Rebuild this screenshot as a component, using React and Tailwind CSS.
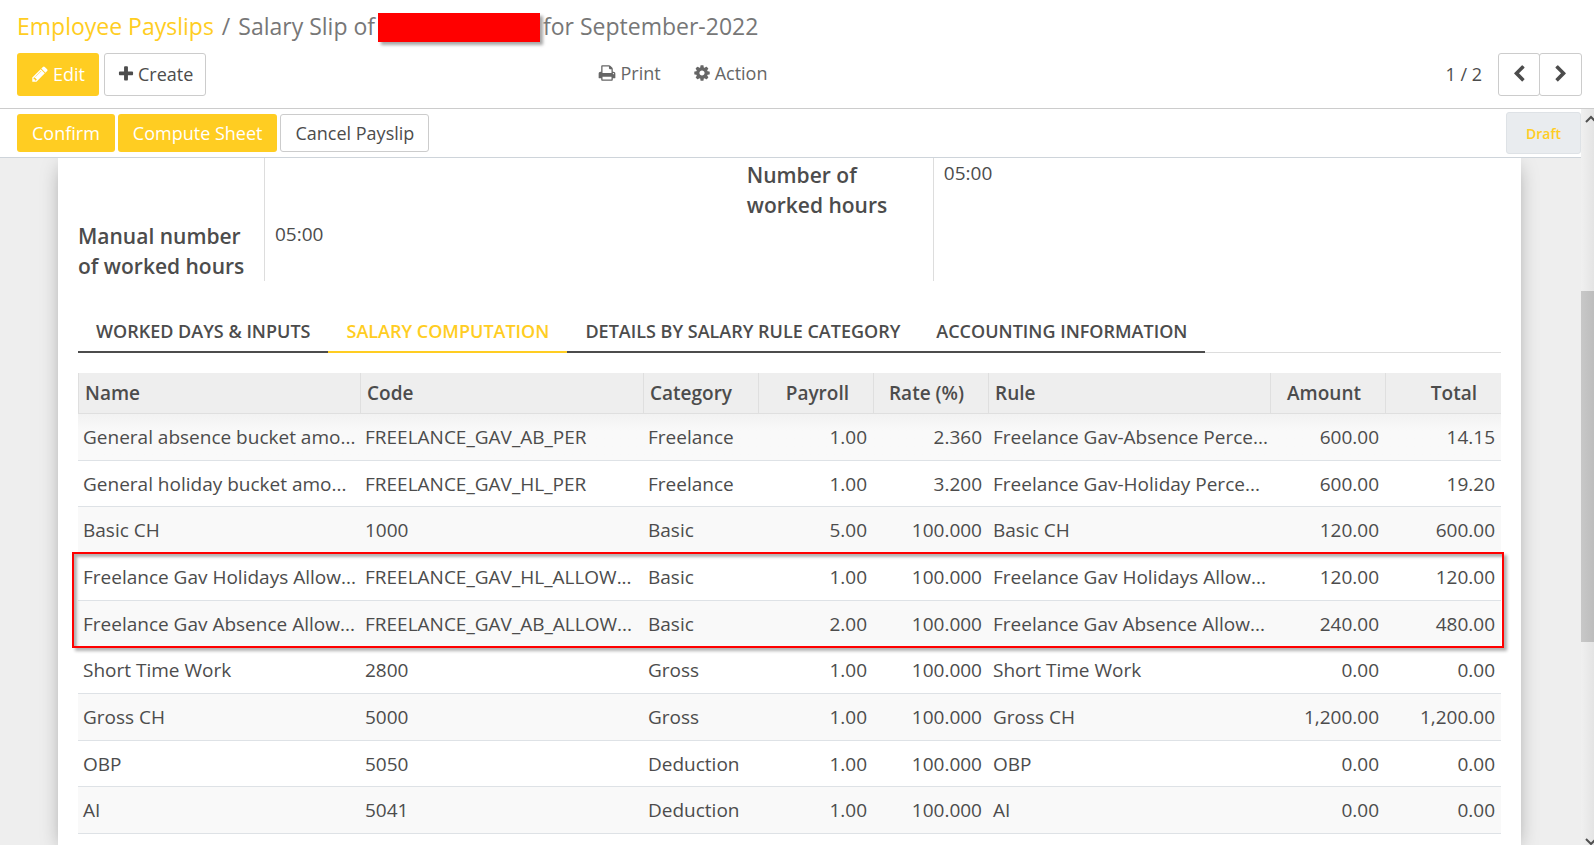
import React, { useState } from "react";

const icons = {
  pencil:
    "M491 1536l91-91-235-235-91 91v107h128v128h107zm523-928q0-22-22-22-10 0-17 7l-542 542q-7 7-7 17 0 22 22 22 10 0 17-7l542-542q7-7 7-17zm-54-192l416 416-832 832h-416v-416zm683 96q0 53-37 90l-166 166-416-416 166-165q36-38 90-38 53 0 91 38l235 234q37 39 37 91z",
  plus:
    "M1600 736v192q0 40-28 68t-68 28h-416v416q0 40-28 68t-68 28h-192q-40 0-68-28t-28-68v-416h-416q-40 0-68-28t-28-68v-192q0-40 28-68t68-28h416v-416q0-40 28-68t68-28h192q40 0 68 28t28 68v416h416q40 0 68 28t28 68z",
  print:
    "M448 1536h896v-256h-896v256zm0-640h896v-384h-160q-40 0-68-28t-28-68v-160h-640v640zm1152 64q0-26-19-45t-45-19-45 19-19 45 19 45 45 19 45-19 19-45zm128 0v416q0 13-9.5 22.5t-22.5 9.5h-224v160q0 40-28 68t-68 28h-960q-40 0-68-28t-28-68v-160h-224q-13 0-22.5-9.5t-9.5-22.5v-416q0-79 56.5-135.5t135.5-56.5h64v-544q0-40 28-68t68-28h672q40 0 88 20t76 48l152 152q28 28 48 76t20 88v256h64q79 0 135.5 56.5t56.5 135.5z",
  cog:
    "M1152 896q0-106-75-181t-181-75-181 75-75 181 75 181 181 75 181-75 75-181zm512-109v222q0 12-8 23t-20 13l-185 28q-19 54-39 91 35 50 107 138 10 12 10 25t-9 23q-27 37-99 108t-94 71q-12 0-26-9l-138-108q-44 23-91 38-16 136-29 186-7 28-36 28h-222q-14 0-24.5-8.5t-11.5-21.5l-28-184q-49-16-90-37l-141 107q-10 9-25 9-14 0-25-11-126-114-165-168-7-10-7-23 0-12 8-23 15-21 51-66.5t54-70.5q-27-50-41-99l-183-27q-13-2-21-12.5t-8-23.5v-222q0-12 8-23t19-13l186-28q14-46 39-92-40-57-107-138-10-12-10-24 0-10 9-23 26-36 98.5-107.5t94.5-71.5q13 0 26 10l138 107q44-23 91-38 16-136 29-186 7-28 36-28h222q14 0 24.5 8.5t11.5 21.5l28 184q49 16 90 37l142-107q9-9 24-9 13 0 25 10 129 119 165 170 7 8 7 22 0 12-8 23-15 21-51 66.5t-54 70.5q26 50 41 98l183 28q13 2 21 12.5t8 23.5z",
  left:
    "M1427 301l-531 531 531 531q19 19 19 45t-19 45l-166 166q-19 19-45 19t-45-19l-742-742q-19-19-19-45t19-45l742-742q19-19 45-19t45 19l166 166q19 19 19 45t-19 45z",
  right:
    "M1363 877l-742 742q-19 19-45 19t-45-19l-166-166q-19-19-19-45t19-45l531-531-531-531q-19-19-19-45t19-45l166-166q19-19 45-19t45 19l742 742q19 19 19 45t-19 45z",
};

const Icon = ({ name }) => (
  <svg viewBox="0 0 1792 1792" className="w-[18px] h-[18px] shrink-0" fill="currentColor" aria-hidden="true">
    <path d={icons[name]} />
  </svg>
);

const tabs = [
  "Worked Days & Inputs",
  "Salary Computation",
  "Details By Salary Rule Category",
  "Accounting Information",
];

const columns = [
  { label: "Name", width: "w-[282px]" },
  { label: "Code", width: "w-[283px]" },
  { label: "Category", width: "w-[115px]" },
  { label: "Payroll", width: "w-[115px]", number: true },
  { label: "Rate (%)", width: "w-[115px]", number: true },
  { label: "Rule", width: "w-[282px]" },
  { label: "Amount", width: "w-[115px]", number: true },
  { label: "Total", width: "w-[116px]", number: true },
];

const lines = [
  ["General absence bucket amo...", "FREELANCE_GAV_AB_PER", "Freelance", "1.00", "2.360", "Freelance Gav-Absence Perce...", "600.00", "14.15"],
  ["General holiday bucket amo...", "FREELANCE_GAV_HL_PER", "Freelance", "1.00", "3.200", "Freelance Gav-Holiday Perce...", "600.00", "19.20"],
  ["Basic CH", "1000", "Basic", "5.00", "100.000", "Basic CH", "120.00", "600.00"],
  ["Freelance Gav Holidays Allow...", "FREELANCE_GAV_HL_ALLOW...", "Basic", "1.00", "100.000", "Freelance Gav Holidays Allow...", "120.00", "120.00"],
  ["Freelance Gav Absence Allow...", "FREELANCE_GAV_AB_ALLOW...", "Basic", "2.00", "100.000", "Freelance Gav Absence Allow...", "240.00", "480.00"],
  ["Short Time Work", "2800", "Gross", "1.00", "100.000", "Short Time Work", "0.00", "0.00"],
  ["Gross CH", "5000", "Gross", "1.00", "100.000", "Gross CH", "1,200.00", "1,200.00"],
  ["OBP", "5050", "Deduction", "1.00", "100.000", "OBP", "0.00", "0.00"],
  ["AI", "5041", "Deduction", "1.00", "100.000", "AI", "0.00", "0.00"],
];

const ControlPanel = () => (
  <header className="border-b border-[#ccc] pl-[17px] pr-3 pt-[9px] pb-3 text-lg">
    <nav className="flex items-center h-9 text-[23px] text-[#777]">
      <a href="#payslips" className="text-[#ffcd22]">Employee Payslips</a>
      <span className="px-2">/</span>
      <span>Salary Slip of</span>
      <span className="w-[162px] h-[29px] ml-[3px] mr-[3px] bg-[#f00] shadow-[3px_3px_3px_rgba(0,0,0,0.35)]"></span>
      <span>for September-2022</span>
    </nav>
    <div className="flex justify-between mt-2">
      <div className="w-1/2 flex items-center justify-between">
        <div className="flex gap-[5px]">
          <button className="flex items-center gap-1 h-[43px] px-[14px] pb-[2px] rounded-[3px] bg-[#ffcd22] text-white">
            <Icon name="pencil" />
            Edit
          </button>
          <button className="flex items-center gap-[3px] h-[43px] px-3 pb-[2px] rounded-[3px] border border-[#ccc]">
            <Icon name="plus" />
            Create
          </button>
        </div>
        <div className="flex gap-8 pr-8 pb-1 text-[#666]">
          <button className="flex items-center gap-1">
            <Icon name="print" />
            Print
          </button>
          <button className="flex items-center gap-1">
            <Icon name="cog" />
            Action
          </button>
        </div>
      </div>
      <div className="flex items-center">
        <span className="mr-4 pb-[2px]">1 / 2</span>
        <button aria-label="Previous" className="flex items-center justify-center w-[42px] h-[43px] pb-[2px] rounded-[3px] border border-[#ccc]">
          <Icon name="left" />
        </button>
        <button aria-label="Next" className="flex items-center justify-center w-[43px] h-[43px] pb-[2px] -ml-px rounded-[3px] border border-[#ccc]">
          <Icon name="right" />
        </button>
      </div>
    </div>
  </header>
);

const StatusBar = () => (
  <div className="flex items-center justify-between h-[49px] pl-[17px] border-b border-[#ced4da] bg-white text-lg">
    <div className="flex gap-[3px]">
      <button className="h-[38px] px-[15px] rounded-[3px] bg-[#ffcd22] text-white">Confirm</button>
      <button className="h-[38px] px-[15px] rounded-[3px] bg-[#ffcd22] text-white">Compute Sheet</button>
      <button className="h-[38px] px-[14px] rounded-[3px] border border-[#ccc]">Cancel Payslip</button>
    </div>
    <span className="flex items-center justify-center w-[75px] h-[42px] pt-px rounded-[3px] border border-[#dee2e6] bg-[#e9ecef] text-sm font-semibold text-[#ffcd22]">
      Draft
    </span>
  </div>
);

const HoursField = ({ label, className }) => (
  <dl className="flex flex-1 h-[123px] leading-[30px]">
    <dt className="w-[187px] pr-3 text-[21px] font-semibold border-r border-[#ddd]">
      <div className={`pt-[2px] ${className}`}>{label}</div>
    </dt>
    <dd className={`pl-[10px] ${className}`}>05:00</dd>
  </dl>
);

const PayslipLines = () => (
  <div className="relative mt-5">
    <table className="w-full h-[461px] table-fixed border-separate border-spacing-0">
      <thead className="bg-[#eee]">
        <tr className="h-[41px]">
          {columns.map((col) => (
            <th
              key={col.label}
              className={`${col.width} py-0 border-l border-b border-[#dfdfdf] font-semibold ${
                col.number ? "text-right pr-6" : "text-left pl-[6px]"
              }`}
            >
              {col.label}
            </th>
          ))}
        </tr>
      </thead>
      <tbody>
        {lines.map((line) => (
          <tr key={line[0]} className="odd:bg-[#f9f9f9] first:bg-linear-to-b first:from-[#f2f2f2] first:to-[#f9f9f9] first:to-35%">
            {line.map((value, i) => (
              <td
                key={i}
                className={`pt-px pb-0 border-b border-[#dee2e6] whitespace-nowrap ${
                  columns[i].number ? "text-right pr-[6px]" : "text-left pl-[5px]"
                }`}
              >
                {value}
              </td>
            ))}
          </tr>
        ))}
      </tbody>
    </table>
    {/* highlight around the two allowance lines */}
    <div className="absolute top-[179px] -left-[6px] -right-[3px] h-24 border-2 border-[#f00] pointer-events-none shadow-[3px_3px_3px_rgba(0,0,0,0.3),inset_3px_3px_3px_rgba(0,0,0,0.3)]"></div>
  </div>
);

const App = () => {
  const [activeTab, setActiveTab] = useState("Salary Computation");

  return (
    <div className="flex flex-col h-screen overflow-hidden bg-white font-['Open_Sans',sans-serif] text-[19px] text-[#4c4c4c]">
      <ControlPanel />
      <div className="flex flex-1 min-h-0">
        <main className="flex flex-col flex-1 min-w-0">
          <StatusBar />
          <div className="flex-1 min-h-0 overflow-hidden bg-[#eee] pl-[58px] pr-[60px]">
            <div className="min-h-full bg-white px-5 shadow-[0_5px_20px_-5px_rgba(0,0,0,0.4)]">
              <div className="flex">
                <div className="w-[47%]">
                  <HoursField label="Manual number of worked hours" className="mt-[61px]" />
                </div>
                <HoursField label="Number of worked hours" className="" />
              </div>
              <div role="tablist" className="flex mt-7 shadow-[inset_0_-1px_#ddd]">
                {tabs.map((tab) => (
                  <button
                    key={tab}
                    role="tab"
                    aria-selected={activeTab === tab}
                    onClick={() => setActiveTab(tab)}
                    className={`h-[44px] px-[18px] pt-[2px] border-b-2 text-lg font-semibold uppercase ${
                      activeTab === tab ? "border-[#ffcd22] text-[#ffcd22]" : "border-[#4c4c4c]"
                    }`}
                  >
                    {tab}
                  </button>
                ))}
              </div>
              <PayslipLines />
            </div>
          </div>
        </main>
        <div className="flex flex-col w-[13px] overflow-hidden bg-linear-to-r from-[#f0f0f0] to-[#e4e4e4]">
          <svg viewBox="0 0 17 17" className="w-[17px] h-[17px] shrink-0" fill="none" stroke="#505050" strokeWidth="2">
            <path d="M5 13l5-5 5 5" />
          </svg>
          <div className="basis-[165px] shrink-0"></div>
          <div className="basis-[351px] shrink-0 bg-linear-to-r from-[#c8c8c8] to-[#bdbdbd]"></div>
          <svg viewBox="0 0 17 17" className="w-[17px] h-[17px] mt-auto shrink-0" fill="none" stroke="#505050" strokeWidth="2">
            <path d="M5 11l5 5 5-5" />
          </svg>
        </div>
      </div>
    </div>
  );
};

export default App;
